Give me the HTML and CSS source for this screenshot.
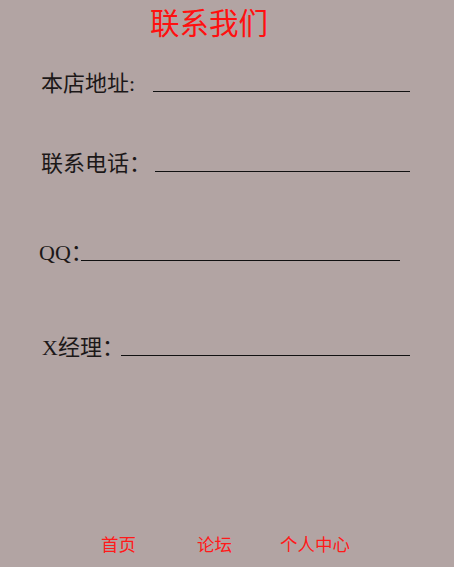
FILE: index.html
```html
<!DOCTYPE html>
<html lang="zh">
<head>
<meta charset="utf-8">
<title>联系我们</title>
<link rel="stylesheet" href="styles.css">
</head>
<body>
<div class="page">
  <h1 class="title">联系我们</h1>
  <div class="row row1"><span class="label">本店地址:</span><span class="line"></span></div>
  <div class="row row2"><span class="label">联系电话：</span><span class="line"></span></div>
  <div class="row row3"><span class="label">QQ：</span><span class="line"></span></div>
  <div class="row row4"><span class="label">X经理：</span><span class="line"></span></div>
  <nav class="footer">
    <a class="nav-item nav1">首页</a>
    <a class="nav-item nav2">论坛</a>
    <a class="nav-item nav3">个人中心</a>
  </nav>
</div>
</body>
</html>
```
FILE: styles.css
```css
html, body {
  margin: 0;
  padding: 0;
}
body {
  background: #b2a4a3;
  font-family: "Liberation Serif", "Noto Sans CJK SC", serif;
  color: #1c1818;
}
.page {
  min-height: 567px;
  display: flex;
  flex-direction: column;
}
.title {
  margin: 6px 0 0 0;
  padding-left: 150px;
  font-size: 29.5px;
  line-height: 36px;
  font-weight: normal;
  color: #ff1010;
}
.row {
  display: flex;
  align-items: flex-end;
  height: 30px;
  line-height: 30px;
  font-size: 22px;
  font-feature-settings: "halt";
}
.label {
  flex: none;
  white-space: nowrap;
}
.line {
  flex: 1;
  height: 0;
  border-bottom: 1px solid #111;
  margin-bottom: 7px;
}
.row1 { margin-top: 27px; padding-left: 41px; margin-right: 44px; }
.row1 .label { width: 112px; }
.row2 { margin-top: 50px; padding-left: 41px; margin-right: 44px; }
.row2 .label { width: 114px; }
.row3 { margin-top: 59px; padding-left: 39px; margin-right: 54px; }
.row3 .label { width: 42px; }
.row4 { margin-top: 65px; padding-left: 42px; margin-right: 44px; }
.row4 .label { width: 79px; }
.footer {
  margin-top: auto;
  padding: 0 0 10px 101px;
  display: flex;
  font-size: 17.5px;
  line-height: 24px;
}
.nav-item {
  color: #ff1a1a;
  text-decoration: none;
}
.nav2 { margin-left: 61px; }
.nav3 { margin-left: 48px; }
```
